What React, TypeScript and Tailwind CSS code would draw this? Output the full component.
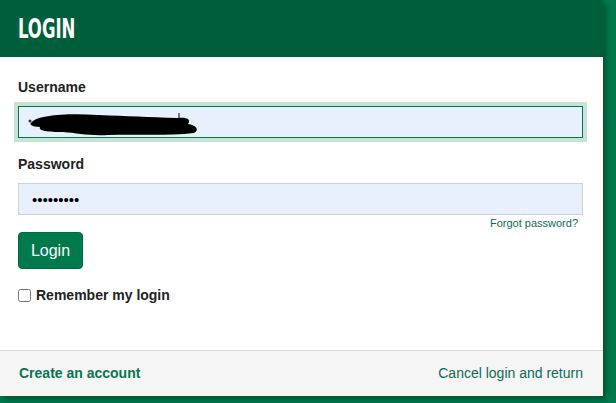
export default function App() {
    return (
        <div className="h-[403px] w-[616px] overflow-hidden bg-[#007a4d] font-['Liberation_Sans',Arial,sans-serif]">
            <div className="flex h-[396px] w-[603px] flex-col bg-white shadow-[3px_3px_6px_rgba(0,0,0,0.35)]">
                {/* Header */}
                <div className="flex h-[57px] shrink-0 items-center bg-[#005f3b] pl-[18px]">
                    <h1 className="origin-left scale-x-[0.68] font-['DejaVu_Sans_Condensed',sans-serif] text-[27px] leading-none font-bold text-white">
                        LOGIN
                    </h1>
                </div>

                {/* Form */}
                <div className="flex-1 px-[18px] pt-[20px]">
                    <label className="block text-[14px] leading-[20px] font-bold text-[#222]">Username</label>
                    <div className="relative mt-[9px]">
                        <input
                            type="text"
                            className="block h-[32px] w-[565px] border border-[#00784b] bg-[#e8f0fe] px-3 text-[13px] outline-none ring-[4px] ring-[#c7e3d6]"
                        />
                        {/* redaction scribble */}
                        <svg className="absolute top-[5px] left-[10px]" width="172" height="26" viewBox="0 0 172 26">
                            <path
                                d="M4 11 C10 4 40 2 70 4 C100 5 120 6 150 7 C160 6 163 9 160 13 C168 14 172 19 166 22 C140 25 110 23 80 24 C60 25 50 22 35 21 C20 21 10 20 12 16 C4 16 0 13 4 11 Z"
                                fill="#000"
                            />
                            <circle cx="2" cy="10" r="1.5" fill="#333" />
                            <path d="M151 2 L151 8" stroke="#000" strokeWidth="1" />
                        </svg>
                    </div>

                    <label className="mt-[16px] block text-[14px] leading-[20px] font-bold text-[#222]">Password</label>
                    <input
                        type="password"
                        defaultValue="123456789"
                        className="mt-[9px] block h-[32px] w-[565px] border border-[#ccd1da] bg-[#e8f0fe] px-[13px] text-[15px] text-black outline-none"
                    />
                    <div className="flex w-[560px] justify-end">
                        <a className="text-[11px] leading-[16px] text-[#0e6b58]">Forgot password?</a>
                    </div>

                    <button className="mt-px h-[37px] w-[65px] rounded-[4px] border border-[#006b43] bg-[#007a4d] text-[16px] text-white">
                        Login
                    </button>

                    <label className="mt-[16px] flex items-center gap-[5px] text-[14px] leading-[20px] font-bold text-[#222]">
                        <input type="checkbox" className="m-0 h-[13px] w-[13px]" />
                        Remember my login
                    </label>
                </div>

                {/* Footer */}
                <div className="flex h-[46px] shrink-0 items-center justify-between border-t border-[#d9d9d9] bg-[#f5f5f5] pr-[20px] pl-[19px]">
                    <a className="text-[14px] font-bold text-[#0b7650]">Create an account</a>
                    <a className="text-[14px] text-[#0e6b58]">Cancel login and return</a>
                </div>
            </div>
        </div>
    );
}
